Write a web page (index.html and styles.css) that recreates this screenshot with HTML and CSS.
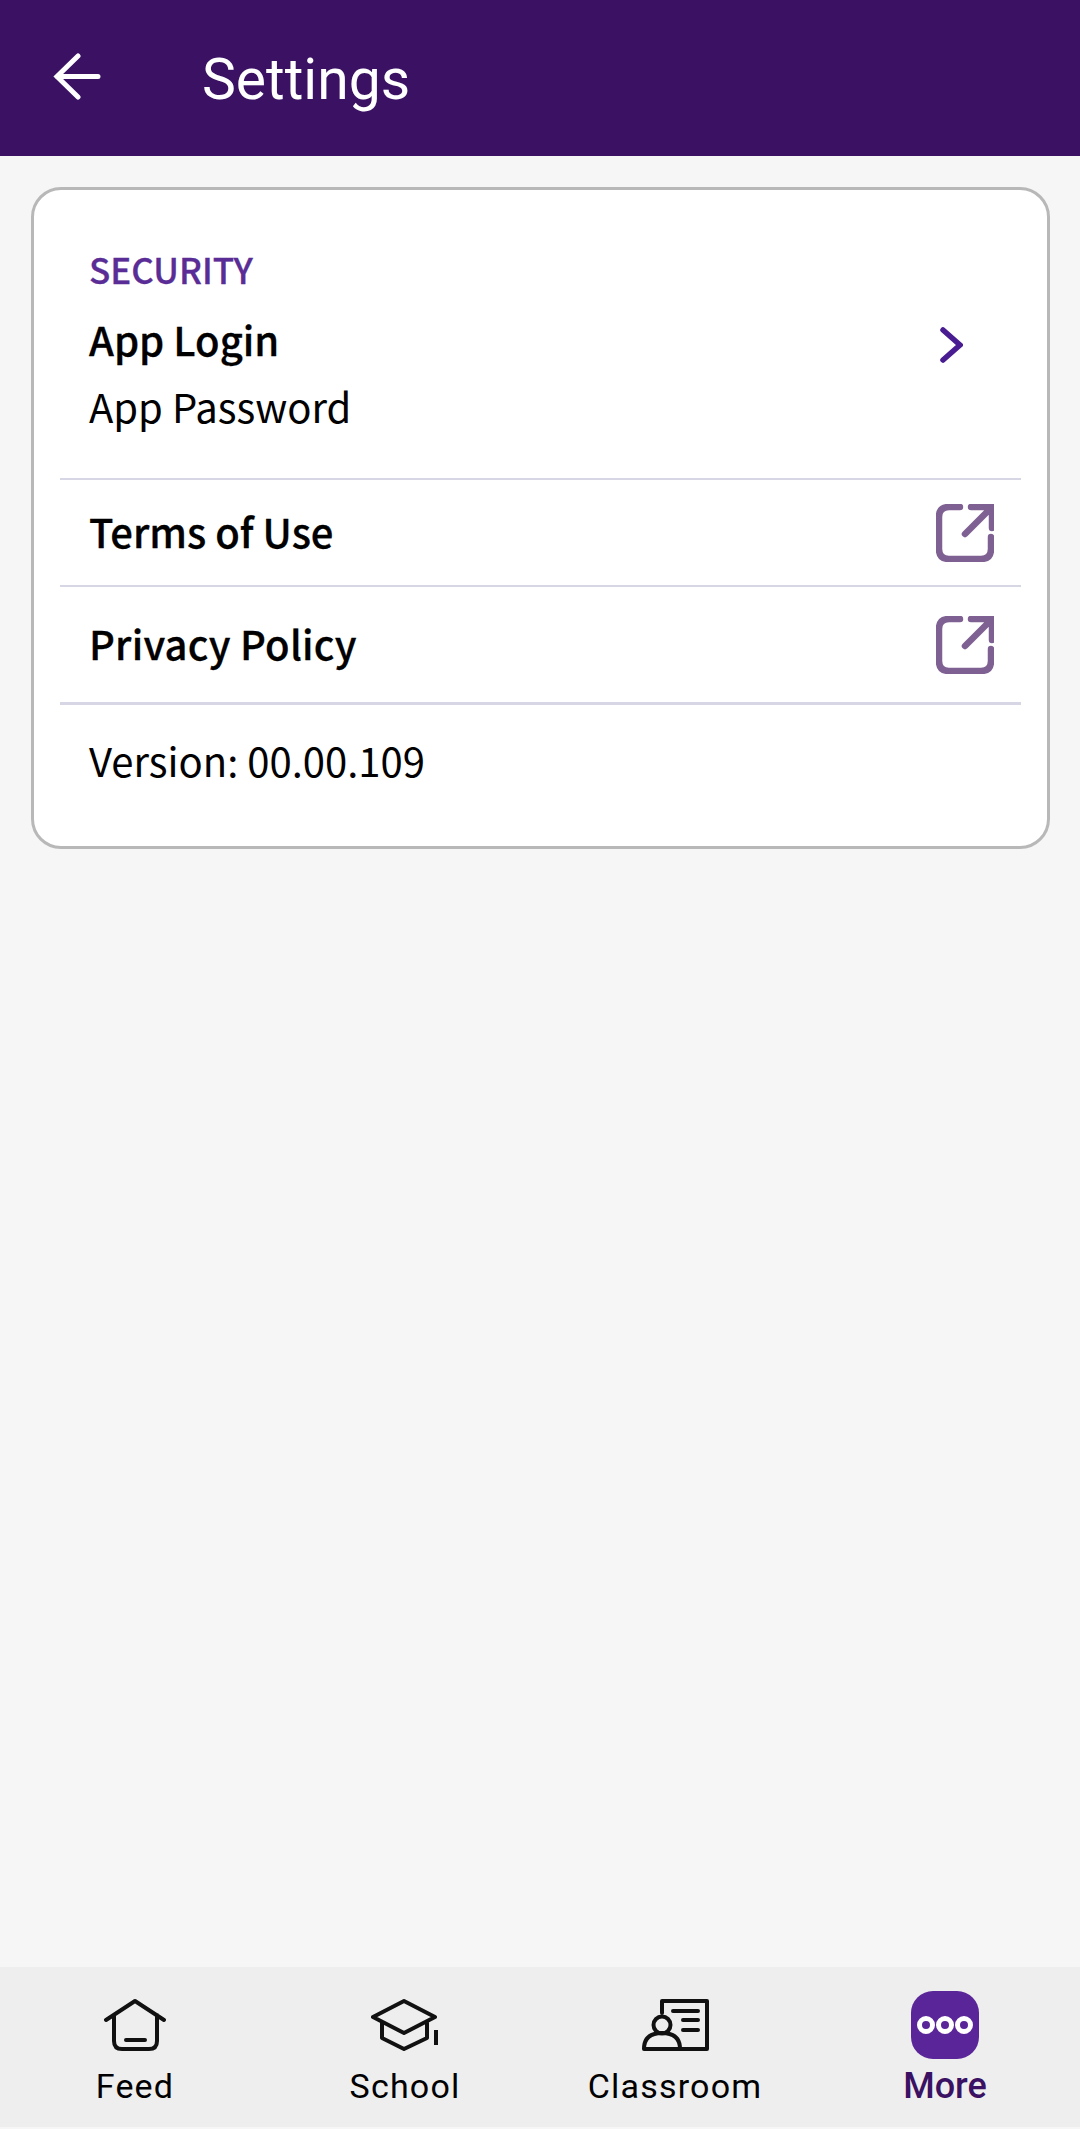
FILE: index.html
```html
<!DOCTYPE html>
<html>
<head>
  <meta charset="utf-8" />
  <title>Settings</title>
  <link rel="stylesheet" href="styles.css">
</head>
<body>
  <header class="topbar">
    <svg class="back" width="48" height="48" viewBox="0 0 48 48"><path d="M45 23.500H4M25 3 4 23.500 25 44"/></svg>
    <h1>Settings</h1>
  </header>

  <main class="content">
    <section class="card">
      <div class="row row-security">
        <div class="security-text">
          <div class="section-title">SECURITY</div>
          <div class="item-title">App Login</div>
          <div class="item-text">App Password</div>
        </div>
        <svg class="chevron" width="24" height="36" viewBox="0 0 24 36"><path d="M4 3l17 15L4 33"/></svg>
      </div>
      <div class="row row-terms">
        <div class="item-title">Terms of Use</div>
        <svg class="external" width="58" height="58" viewBox="0 0 58 58"><path d="M24 3H13Q3 3 3 13v32q0 10 10 10h32q10 0 10-10V33M35 3h21v21M55 4 29 30"/></svg>
      </div>
      <div class="row row-privacy">
        <div class="item-title">Privacy Policy</div>
        <svg class="external" width="58" height="58" viewBox="0 0 58 58"><path d="M24 3H13Q3 3 3 13v32q0 10 10 10h32q10 0 10-10V33M35 3h21v21M55 4 29 30"/></svg>
      </div>
      <div class="row row-version">
        <div class="item-text">Version: 00.00.109</div>
      </div>
    </section>
  </main>

  <nav class="tabs">
    <div class="tab">
      <svg class="tab-icon" width="68" height="68" viewBox="0 0 68 68"><path d="M5 29 34 10l29 19M13 24v26q0 8 8 8h27q8 0 8-8V24M25 49h19"/></svg>
      <span>Feed</span>
    </div>
    <div class="tab">
      <svg class="tab-icon" width="68" height="68" viewBox="0 0 68 68"><path d="M2 26 33 10l31 16-31 16zM11 32v15l22 11 23-11V32"/><path class="tassel" d="M65 39v15"/></svg>
      <span>School</span>
    </div>
    <div class="tab">
      <svg class="tab-icon" width="68" height="68" viewBox="0 0 68 68">
        <path d="M21 22V10h45v48H3q0-16 18-16t18 16M32 20h25M42 29h15M42 39h15"/>
        <circle cx="21" cy="34" r="8.500"/>
      </svg>
      <span>Classroom</span>
    </div>
    <div class="tab active">
      <svg class="tab-icon" width="68" height="68" viewBox="0 0 68 68">
        <rect width="68" height="68" rx="22" fill="#5a2599"/>
        <circle cx="15" cy="34" r="6.500" class="dot"/>
        <circle cx="34" cy="34" r="6.500" class="dot"/>
        <circle cx="53" cy="34" r="6.500" class="dot"/>
      </svg>
      <span>More</span>
    </div>
  </nav>
</body>
</html>
```
FILE: styles.css
```css
body {
  margin: 0;
  height: 2129px;
  display: flex;
  flex-direction: column;
  background: #f6f6f6;
  font-family: "Noto Sans CJK JP", "Noto Sans", sans-serif;
  color: #000;
  overflow: hidden;
}

svg {
  display: block;
  flex: none;
  fill: none;
}

.topbar {
  height: 156px;
  flex: none;
  display: flex;
  align-items: center;
  padding-left: 53px;
  box-sizing: border-box;
  background: #3a1163;
}
.topbar h1 {
  margin: 3px 0 0 101px;
  font: 400 57px/60px Roboto, sans-serif;
  color: #fff;
}
.back {
  margin-top: -3px;
}
.back path {
  stroke: #fff;
  stroke-width: 5;
  stroke-linecap: round;
}

.content {
  flex: 1;
  padding: 31px 30px 0 31px;
}
.card {
  height: 662px;
  box-sizing: border-box;
  padding: 0 26px;
  background: #fff;
  border: 3px solid #b8b8b8;
  border-radius: 30px;
}

.row {
  display: flex;
  align-items: center;
  justify-content: space-between;
  box-sizing: border-box;
  padding: 0 27px 0 29px;
  border-bottom: 2px solid #d6d6e4;
}
.row-security {
  height: 290px;
  align-items: flex-start;
  padding-top: 58px;
}
.row-terms {
  height: 107px;
  padding-bottom: 4px;
}
.row-privacy {
  height: 118px;
  padding-bottom: 4px;
  border-bottom-width: 3px;
}
.row-version {
  border: none;
  height: 118px;
  padding-bottom: 8px;
}

.section-title {
  font-size: 35px;
  line-height: 42px;
  font-weight: 500;
  color: #5a2d96;
  -webkit-text-stroke: 0.3px #5a2d96;
}
.item-title {
  font-size: 40px;
  line-height: 52px;
  font-weight: 500;
  -webkit-text-stroke: 0.3px #000;
}
.row-privacy .item-title {
  letter-spacing: 0.2px;
}
.row-security .item-title {
  margin-top: 23px;
}
.item-text {
  font-size: 40px;
  line-height: 52px;
  font-weight: 400;
}
.row-security .item-text {
  margin-top: 15px;
}

.chevron {
  margin: 79px 31px 0 0;
}
.chevron path {
  stroke: #4a1c92;
  stroke-width: 5.500;
  stroke-linecap: round;
}
.external {
  margin-top: 4px;
}
.external path {
  stroke: #7f6093;
  stroke-width: 6.500;
  stroke-linecap: round;
}

.tabs {
  flex: none;
  height: 160px;
  margin-bottom: 2px;
  display: flex;
  padding-top: 24px;
  box-sizing: border-box;
  background: #eee;
}
.tab {
  flex: 1;
  display: flex;
  flex-direction: column;
  align-items: center;
  font: 400 34px/40px Roboto, sans-serif;
  letter-spacing: 1.200px;
}
.tab span {
  margin-top: 7px;
}
.tab-icon path,
.tab-icon circle:not(.dot) {
  stroke: #111;
  stroke-width: 4;
  stroke-linecap: round;
  stroke-linejoin: round;
}
.tab-icon .tassel {
  stroke-linecap: butt;
}
.tab.active {
  color: #3a1163;
  font-size: 36px;
  font-weight: 500;
  letter-spacing: 0;
}
.dot {
  fill: #5a2599;
  stroke: #fff;
  stroke-width: 5;
}
```
